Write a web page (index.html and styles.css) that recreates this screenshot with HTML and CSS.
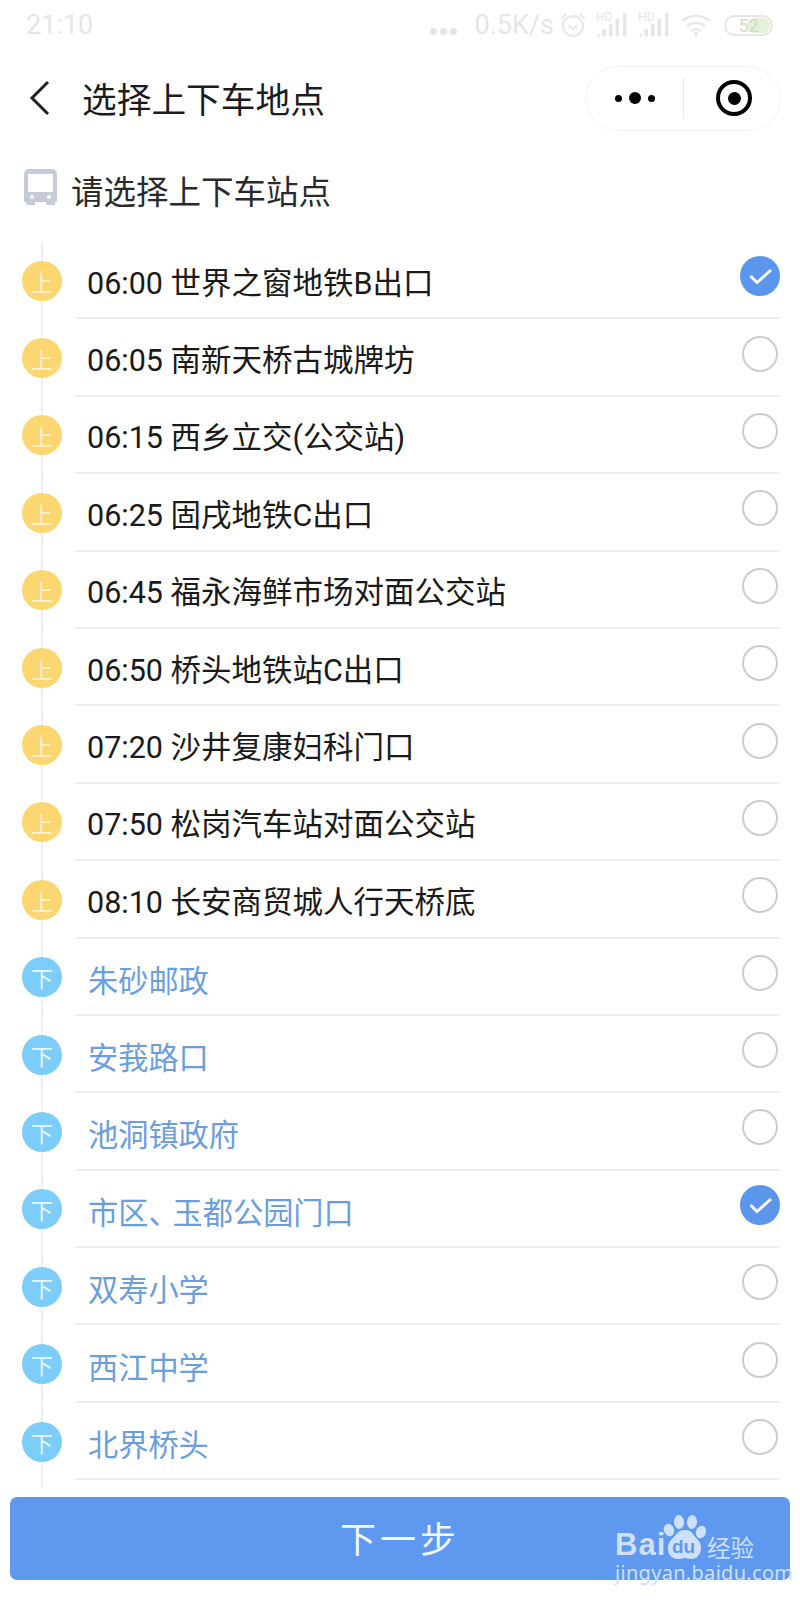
FILE: index.html
```html
<!DOCTYPE html>
<html lang="zh-CN">
<head>
<meta charset="utf-8">
<title>选择上下车地点</title>
<link rel="stylesheet" href="styles.css">
</head>
<body>
<svg class="defs" width="0" height="0" aria-hidden="true">
  <symbol id="bars" viewBox="0 0 31 24">
    <path d="M0 23.500l4-3v3z"/>
    <rect x="6.500" y="16" width="3.500" height="7.500"/>
    <rect x="13" y="11" width="3.500" height="12.500"/>
    <rect x="19.500" y="6" width="3.500" height="17.500"/>
    <rect x="27" y="0" width="3.500" height="23.500"/>
  </symbol>
  <symbol id="check" viewBox="0 0 40 40">
    <circle cx="20" cy="20" r="20" fill="#5b96ed"/>
    <path d="M10.500 20l6.500 6.500 14-12.500" fill="none" stroke="#fff" stroke-width="3"/>
  </symbol>
</svg>
<div class="status">
  <span class="time">21:10</span>
  <div class="status-right">
    <span class="dots"><i></i><i></i><i></i></span>
    <span class="speed">0.5K/s</span>
    <svg class="alarm" width="28" height="26" viewBox="0 0 28 26"><circle cx="14" cy="14" r="10" fill="none" stroke="#e8e8e8" stroke-width="2"/><path d="M9.500 13l4.500 4 4.500-4M2 7l5-5M26 7l-5-5" fill="none" stroke="#e8e8e8" stroke-width="2"/></svg>
    <span class="sig"><span class="hd">HD</span><svg class="bars" width="31" height="24"><use href="#bars"/></svg></span>
    <span class="sig"><span class="hd">HD</span><svg class="bars" width="31" height="24"><use href="#bars"/></svg></span>
    <svg class="wifi" width="32" height="24" viewBox="0 0 32 24"><path d="M2 8c8-7 20-7 28 0M7 13c5-4.500 13-4.500 18 0M11.500 18c2.500-2 6.500-2 9 0" fill="none" stroke="#e8e8e8" stroke-width="2.500"/><circle cx="16" cy="21" r="2.200" fill="#e8e8e8"/></svg>
    <span class="battery"><span class="battery-fill"></span><span class="battery-num">52</span></span>
  </div>
</div>
<nav class="nav">
  <svg class="back" width="22" height="36" viewBox="0 0 22 36"><path d="M19 2L3 18l16 16" fill="none" stroke="#222" stroke-width="3"/></svg>
  <h1 class="title">选择上下车地点</h1>
  <div class="capsule">
    <div class="cap-more"><i class="dot-s"></i><i class="dot-l"></i><i class="dot-s"></i></div>
    <div class="cap-div"></div>
    <div class="cap-close"><span class="ring"><span class="ring-in"></span></span></div>
  </div>
</nav>
<div class="head">
  <svg class="bus" width="33" height="36" viewBox="0 0 33 36"><path d="M5 0h23a5 5 0 0 1 5 5v28H0V5a5 5 0 0 1 5-5z" fill="#c5cbd9"/><rect x="4" y="5" width="25" height="18" fill="#fff"/><circle cx="8" cy="28" r="2" fill="#fff"/><circle cx="25" cy="28" r="2" fill="#fff"/><rect x="2" y="32" width="9" height="4" rx="1.500" fill="#c5cbd9"/><rect x="22" y="32" width="9" height="4" rx="1.500" fill="#c5cbd9"/></svg>
  <span class="head-text">请选择上下车站点</span>
</div>
<ul class="list">
  <li class="row"><span class="badge up">上</span><div class="body"><span class="name">06:00 世界之窗地铁B出口</span><svg class="tick" width="40" height="40"><use href="#check"/></svg></div></li>
  <li class="row"><span class="badge up">上</span><div class="body"><span class="name">06:05 南新天桥古城牌坊</span><span class="radio"></span></div></li>
  <li class="row"><span class="badge up">上</span><div class="body"><span class="name">06:15 西乡立交(公交站)</span><span class="radio"></span></div></li>
  <li class="row"><span class="badge up">上</span><div class="body"><span class="name">06:25 固戌地铁C出口</span><span class="radio"></span></div></li>
  <li class="row"><span class="badge up">上</span><div class="body"><span class="name">06:45 福永海鲜市场对面公交站</span><span class="radio"></span></div></li>
  <li class="row"><span class="badge up">上</span><div class="body"><span class="name">06:50 桥头地铁站C出口</span><span class="radio"></span></div></li>
  <li class="row"><span class="badge up">上</span><div class="body"><span class="name">07:20 沙井复康妇科门口</span><span class="radio"></span></div></li>
  <li class="row"><span class="badge up">上</span><div class="body"><span class="name">07:50 松岗汽车站对面公交站</span><span class="radio"></span></div></li>
  <li class="row"><span class="badge up">上</span><div class="body"><span class="name">08:10 长安商贸城人行天桥底</span><span class="radio"></span></div></li>
  <li class="row"><span class="badge down">下</span><div class="body"><span class="name off">朱砂邮政</span><span class="radio"></span></div></li>
  <li class="row"><span class="badge down">下</span><div class="body"><span class="name off">安莪路口</span><span class="radio"></span></div></li>
  <li class="row"><span class="badge down">下</span><div class="body"><span class="name off">池洞镇政府</span><span class="radio"></span></div></li>
  <li class="row"><span class="badge down">下</span><div class="body"><span class="name off">市区<span class="narrow">、</span>玉都公园门口</span><svg class="tick" width="40" height="40"><use href="#check"/></svg></div></li>
  <li class="row"><span class="badge down">下</span><div class="body"><span class="name off">双寿小学</span><span class="radio"></span></div></li>
  <li class="row"><span class="badge down">下</span><div class="body"><span class="name off">西江中学</span><span class="radio"></span></div></li>
  <li class="row"><span class="badge down">下</span><div class="body"><span class="name off">北界桥头</span><span class="radio"></span></div></li>
</ul>
<div class="footer">
  <button class="next">下一步</button>
  <div class="mark">
    <div class="mark-top">
      <span class="mark-bai">Bai</span>
      <span class="paw">
        <svg width="45" height="45" viewBox="0 0 45 45"><ellipse cx="8" cy="15" rx="5" ry="6.500" transform="rotate(-20 8 15)" fill="#cfe0fa"/><ellipse cx="18" cy="7" rx="5" ry="7" transform="rotate(-5 18 7)" fill="#cfe0fa"/><ellipse cx="31" cy="7" rx="5" ry="7" transform="rotate(5 31 7)" fill="#cfe0fa"/><ellipse cx="40" cy="17" rx="5" ry="6.500" transform="rotate(20 40 17)" fill="#cfe0fa"/><path d="M24 15c7 0 8 5 13 10 6 6 3 19-7 19-3 0-4-1-6-1s-3 1-7 1C7 44 4 32 10 25c5-5 7-10 14-10z" fill="#cfe0fa"/></svg>
        <span class="paw-du">du</span>
      </span>
      <span class="mark-jy">经验</span>
    </div>
    <div class="mark-url">jingyan.baidu.com</div>
  </div>
</div>
</body>
</html>
```
FILE: styles.css
```css
* { box-sizing: border-box; }
html, body { margin: 0; padding: 0; }
body {
  width: 800px;
  height: 1600px;
  overflow: hidden;
  background: #fff;
  color: #1a1a1a;
  font-family: Roboto, "Noto Sans CJK SC", sans-serif;
}
.defs { position: absolute; }

.status {
  height: 50px;
  padding: 0 27px 0 26px;
  display: flex;
  align-items: center;
  justify-content: space-between;
  color: #e6e6e6;
}
.time { font-size: 27px; }
.status-right { display: flex; align-items: center; }
.dots { display: flex; gap: 3px; margin-right: 18px; margin-top: 12px; }
.dots i { width: 7px; height: 7px; border-radius: 50%; background: #e4e4e4; }
.speed { font-size: 27px; margin-right: 5px; }
.alarm { margin-right: 9px; }
.sig { position: relative; display: block; width: 31px; height: 24px; margin-right: 11px; fill: #e6e6e6; }
.bars { display: block; }
.hd { position: absolute; left: 0; top: -2px; font-size: 12px; line-height: 12px; color: #e6e6e6; }
.wifi { margin-right: 12px; }
.battery {
  position: relative;
  width: 49px;
  height: 21px;
  border: 2px solid #e6e6e6;
  border-radius: 11px;
  font-size: 18px;
  text-align: center;
  line-height: 17px;
  overflow: hidden;
}
.battery-fill { position: absolute; right: 1px; top: 1px; bottom: 1px; width: 23px; background: #e3f2d6; border-radius: 8px; }
.battery-num { position: relative; color: #cfdcc6; }

.nav {
  height: 96px;
  display: flex;
  align-items: center;
  padding: 0 19px 0 29px;
}
.back { margin-right: 31px; }
.title { margin: 0; font-size: 34.700px; font-weight: 400; flex: 1; color: #1c1c1c; }
.capsule {
  width: 196px;
  height: 65px;
  border: 1px solid #f2f2f2;
  border-radius: 33px;
  display: flex;
  align-items: center;
}
.cap-more { width: 97px; display: flex; align-items: center; justify-content: center; gap: 7px; }
.dot-s { width: 7px; height: 7px; border-radius: 50%; background: #000; }
.dot-l { width: 12px; height: 12px; border-radius: 50%; background: #000; }
.cap-div { width: 1px; height: 40px; background: #e8e8e8; }
.cap-close { flex: 1; padding-left: 4px; display: flex; align-items: center; justify-content: center; }
.ring { width: 36px; height: 36px; border: 4px solid #000; border-radius: 50%; display: flex; align-items: center; justify-content: center; }
.ring-in { width: 13px; height: 13px; border-radius: 50%; background: #000; }

.head {
  height: 86px;
  margin-bottom: 10px;
  padding: 0 0 0 24px;
  display: flex;
  align-items: center;
}
.bus { margin: 0 14px 4px 0; }
.head-text { font-size: 32.500px; color: #2a2a2a; }

.list {
  list-style: none;
  margin: 0;
  padding: 0 0 7px;
  background: linear-gradient(#efefef, #efefef) 40.500px 0 / 2px 100% no-repeat;
}
.row {
  height: 77.400px;
  display: flex;
  align-items: center;
  padding: 0 20px 0 22px;
}
.badge {
  width: 40px;
  height: 40px;
  border-radius: 50%;
  flex: none;
  display: flex;
  align-items: center;
  justify-content: center;
  font-size: 22px;
}
.badge.up { background: #fbd671; color: #fdf1cf; }
.badge.down { background: #7ccdf9; color: #e9f7ff; }
.body {
  flex: 1;
  height: 100%;
  margin-left: 13px;
  padding-left: 13px;
  border-bottom: 2px solid #eeeeee;
  display: flex;
  align-items: center;
  justify-content: space-between;
}
.name { font-size: 30.500px; margin-left: -1px; padding-top: 2px; color: #1a1a1a; }
.name.off { font-size: 30.200px; color: #6a9edd; margin-left: 0; padding-top: 5px; }
.narrow { letter-spacing: -6px; }
.radio {
  width: 36px;
  height: 36px;
  margin: 0 2px 7px 0;
  border: 2px solid #cccccc;
  border-radius: 50%;
  background: #fff;
}
.tick { margin: 0 0 7px; }

.footer {
  position: relative;
  padding: 10px 10px 0;
}
.next {
  display: block;
  width: 100%;
  height: 83px;
  border: 0;
  border-radius: 7px;
  background: #5e98ef;
  color: #f2f6fd;
  font-family: "Noto Sans CJK SC", sans-serif;
  font-size: 36px;
  letter-spacing: 4px;
  padding: 0 0 4px;
}
.mark {
  position: absolute;
  left: 615px;
  top: 28px;
  width: 145px;
  color: #cfe0fa;
}
.mark-top { display: flex; align-items: flex-end; height: 45px; }
.mark-bai { font: 700 31px/24px "Liberation Sans", sans-serif; width: 46px; margin-bottom: 3px; letter-spacing: 1px; }
.paw { position: relative; width: 46px; height: 45px; display: block; flex: none; }
.paw svg { display: block; }
.paw-du {
  position: absolute;
  left: 11px;
  top: 21px;
  font: 700 19px/22px "Liberation Sans", sans-serif;
  color: #5e98ef;
}
.mark-jy { font: 400 23.500px/24px "Noto Sans CJK SC", sans-serif; margin-bottom: 1px; white-space: nowrap; }
.mark-url { font: 400 20px/22px "Noto Sans", sans-serif; white-space: nowrap; margin-top: 2px; letter-spacing: .300px; }
```
